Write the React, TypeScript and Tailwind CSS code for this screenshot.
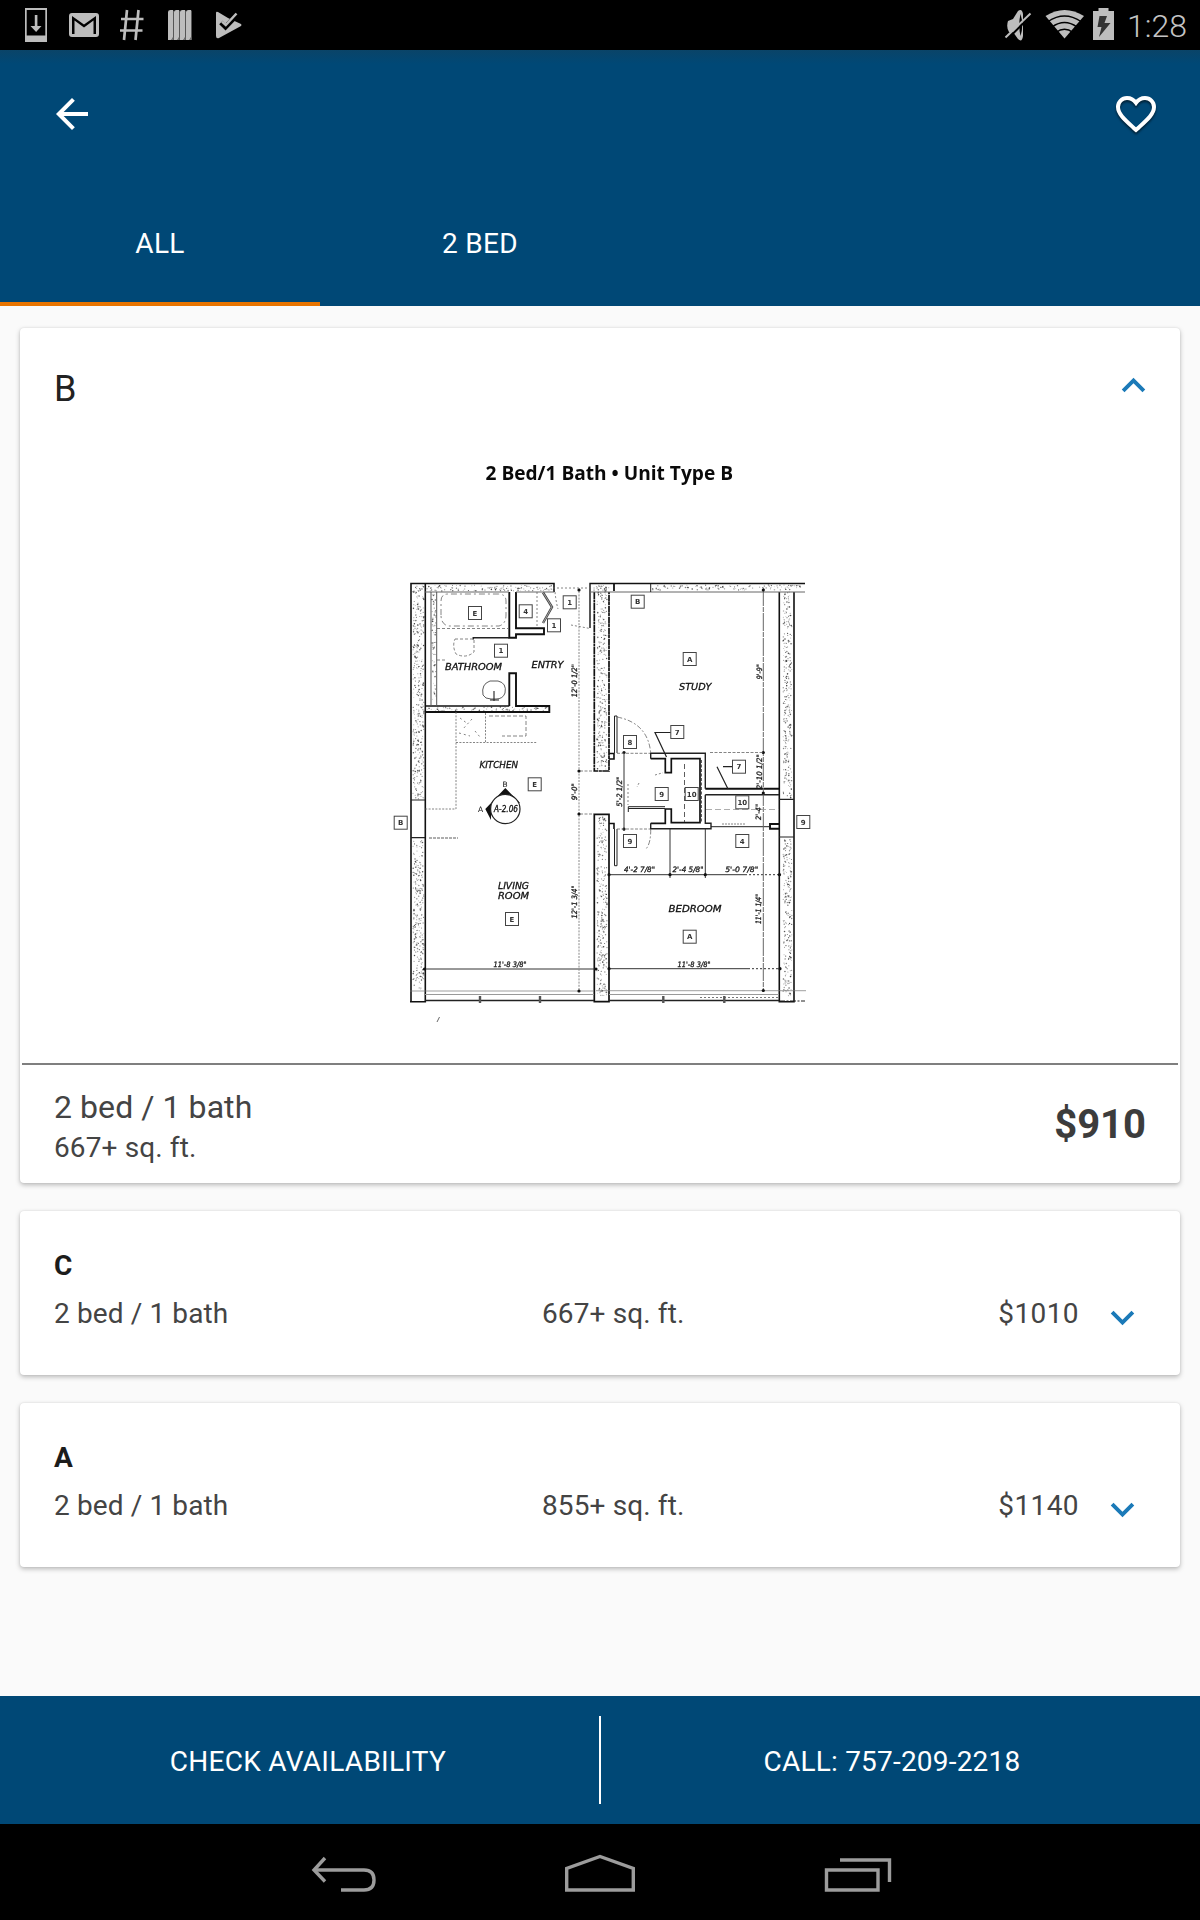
import React from "react";

/* ---------- floor plan ---------- */

type Dot = { x: number; y: number; r: number; o: number };

function stipple(x: number, y: number, w: number, h: number, seed: number): Dot[] {
  const dots: Dot[] = [];
  let s = seed;
  const rnd = () => {
    s = (s * 1103515245 + 12345) % 2147483648;
    return s / 2147483648;
  };
  const n = Math.round((w * h) / 6.5);
  for (let i = 0; i < n; i++) {
    dots.push({ x: x + rnd() * w, y: y + rnd() * h, r: 0.4 + rnd() * 0.4, o: 0.3 + rnd() * 0.55 });
  }
  return dots;
}

const concrete = [
  [413, 586, 11, 213],
  [413, 840, 11, 150],
  [427, 585, 125, 6],
  [432, 594, 4, 110],
  [427, 707, 120, 4],
  [597, 586, 10, 184],
  [597, 816, 10, 180],
  [592, 585, 20, 6],
  [652, 585, 150, 5],
  [783, 592, 9, 206],
  [783, 839, 9, 158],
];

const dots = concrete.flatMap(([x, y, w, h], i) => stipple(x, y, w, h, 911 + i * 77));

function Tag({ x, y, t }: { x: number; y: number; t: string }) {
  return (
    <g>
      <rect x={x - 6.5} y={y - 6.5} width={13} height={13} fill="#fff" stroke="#444" strokeWidth={1} />
      <text x={x} y={y + 2.6} textAnchor="middle" fontSize={7} fontWeight={700} fill="#333">
        {t}
      </text>
    </g>
  );
}

function Room({ x, y, w, t }: { x: number; y: number; w: number; t: string }) {
  return (
    <text x={x} y={y} textLength={w} lengthAdjust="spacingAndGlyphs" fontSize={9.4} fontStyle="italic" fill="#111" stroke="#111" strokeWidth={0.3}>
      {t}
    </text>
  );
}

function Dim({ x, y, w, t, v }: { x: number; y: number; w: number; t: string; v?: boolean }) {
  return (
    <text
      x={x - w / 2}
      y={y + 2.7}
      textLength={w}
      lengthAdjust="spacingAndGlyphs"
      fontSize={7.4}
      fontStyle="italic"
      fill="#1a1a1a"
      stroke="#1a1a1a"
      strokeWidth={0.3}
      transform={v ? `rotate(-90 ${x} ${y})` : undefined}
    >
      {t}
    </text>
  );
}

function FloorPlan() {
  return (
    <svg className="block h-[623px] w-full blur-[0.35px]" viewBox="20 440 1160 623" fontFamily="'DejaVu Sans', sans-serif">
      <text x={485.5} y={480} textLength={247.5} lengthAdjust="spacingAndGlyphs" fontSize={19.6} fontWeight={700} fontFamily="'Open Sans', sans-serif" fill="#0a0a0a">
        2 Bed/1 Bath • Unit Type B
      </text>

      <g>
        {dots.map((d, i) => (
          <circle key={i} cx={d.x} cy={d.y} r={d.r} fill="#222" opacity={d.o} />
        ))}
      </g>

      {/* heavy walls */}
      <g fill="none" stroke="#111" strokeWidth={1.6}>
        <path d="M411 1001.7V583.5H554V592" />
        <path d="M425.3 584V1001.7H410" />
        <path d="M590 628V583.5H805" strokeWidth={1.4} />
        <path d="M614 583V591" strokeWidth={1.8} />
        <path d="M594.3 592V771H609V592" strokeWidth={1.7} strokeDasharray="7 .6 3 .4" />
        <path d="M594.3 1001.7V814.3H609V1001.7Z" strokeWidth={1.7} />
        <path d="M779.3 592V1001.7H794V592" />
        <path d="M509.3 592V637.7H516V634.3H544V628.3H516V592" strokeWidth={1.9} />
        <path d="M509.3 706V673.3H516V706H549.3V712H425" strokeWidth={1.9} />
        <path d="M509.3 706H425" />
        <path d="M650.7 758.7H665.3V772.7H671.3V758.7H700V822.7H671.3V809H665.3V823.3H650.7" strokeWidth={1.7} />
        <path d="M705.3 788.7H779.3" strokeWidth={1.9} />
        <path d="M779 824H770V828.7H779" strokeWidth={1.9} />
        <path d="M609 753.5H614V759H609M609 823.5H614V829" />
      </g>

      {/* thin walls */}
      <g fill="none" stroke="#222" strokeWidth={1}>
        <path d="M425 592H509M516 592H554M590 592H805" stroke="#666" />
        <path d="M650.7 584V592" />
        <path d="M431 592V706M436.7 592V706" stroke="#555" />
        <path d="M473.3 639.5V637.7H509" strokeWidth={1.5} />
        <path d="M411 800H425M411 837.7H425M779 799.3H794M779 837H794" strokeWidth={1.2} />
        <path d="M650.7 758.7V753.3H705.3V788.7M705.3 794.7H779M705.3 794.7V823.3H711V828.7H650.7V823.3" strokeWidth={1.4} />
        <path d="M711 826.7H770" />
        <path d="M628.3 812V806.7H665M628.3 808.5H665" />
        <path d="M614.5 753V716H617V753M614.5 829V865.7H617V829" />
        <path d="M425 1000.5H594M609 1000.5H779" strokeWidth={1.6} />
        <path d="M779 1001H805" strokeDasharray="6 1.5 2 1.5" />
        <path d="M425 994.5H594M609 994.5H779" stroke="#999" />
        <path d="M410 991H594M596 990.7H806" stroke="#777" strokeWidth={0.7} />
        <path d="M700 997.5H779" stroke="#777" strokeDasharray="2 2" />
        <path d="M480 996V1003M540 996V1003M663.3 996V1003M724.3 996V1003" strokeWidth={2.4} stroke="#555" />
      </g>

      {/* dimension lines */}
      <g fill="none" stroke="#333" strokeWidth={1}>
        <path d="M425 969H596M609 968.7H748" />
        <path d="M748 968.7H780" strokeDasharray="2 2" />
        <path d="M609 874.7H745M670 829V878M705.3 829V878M624 752V831" />
        <path d="M745 874.7H779" strokeDasharray="2 2" />
        <path d="M763.3 588V992" strokeDasharray="18 1 5 1" stroke="#666" />
        <path d="M579 588V992" strokeDasharray="2 1.2" stroke="#888" />
      </g>
      <g fill="#111">
        {[
          [424.5, 969], [596, 969], [609, 968.7], [780, 968.7], [609, 874.7], [670, 874.7], [705.3, 874.7], [779.5, 874.7],
          [624, 752.5], [624, 829], [763.3, 590], [763.3, 752.5], [763.3, 793], [763.3, 990.5], [579, 590], [579, 771], [579, 814], [579, 991],
        ].map(([x, y], i) => (
          <circle key={i} cx={x} cy={y} r={1.6} />
        ))}
      </g>

      {/* fixtures and swings */}
      <g fill="none" stroke="#666" strokeWidth={0.8}>
        <path d="M441 615V601Q441 594 448 594H498Q506 594 506 601V615Q506 624 499 626H448Q441 624 441 615" strokeDasharray="6 3 2 3" />
        <path d="M437 628.5H509" strokeDasharray="3 2" />
        <path d="M455 639H474V652Q466 659 456 654Q452 646 455 639M437 660H447" strokeDasharray="3 2" />
        <path d="M483 695Q481 684 490 681H498Q507 683 505 693Q503 699 496 699H491Q485 699 483 695Z" stroke="#333" />
        <path d="M494 691V701M490 700H499" stroke="#222" strokeWidth={1.1} />
        <path d="M456 712V809H425M456 742.5H537M485.5 713V742" strokeDasharray="2 1.4" />
        <path d="M489 716H526V736H502" strokeDasharray="4 2" />
        <path d="M460 718L468 724M472 719L463 729M459 733L470 736M475 731L480 737" strokeDasharray="2 3" />
        <path d="M429 838H458" strokeDasharray="3 1" stroke="#333" />
        <path d="M537 592V628M553 588H590M571 625L590 628.5M555 592Q556 602 558 609" strokeDasharray="2 2" />
        <path d="M617 717Q648 723 650.7 753M650.7 829Q651 843 646 849" strokeDasharray="5 2 2 2" />
        <path d="M617 753.3H650M617 829H650M710 752.5H764M580 771H594M580 814H594" strokeDasharray="3 1.5" />
        <path d="M684.5 764V822" strokeDasharray="5 3" stroke="#333" />
        <path d="M701.5 760V822" strokeDasharray="3 1.5" stroke="#333" />
        <path d="M706 809.5H779" strokeDasharray="6 3" stroke="#999" />
        <path d="M628 784V805M639 783L637 787M655 775L663 772.7" strokeDasharray="2 2" />
        <path d="M722 824H745" strokeDasharray="2 1" />
      </g>
      <path d="M543 592.5L552 607L543 623" fill="none" stroke="#444" strokeWidth={2.4} />
      <path d="M543 592.5L552 607L543 623" fill="none" stroke="#ccc" strokeWidth={0.7} />
      <path d="M671 732.5H655L666.5 757M733 766.7H723M717 766.7L728 789" fill="none" stroke="#222" strokeWidth={1.2} />

      {/* section marker */}
      <path d="M485.3 809L505.3 788L520 803H491V820Z" fill="#111" />
      <circle cx={505.3} cy={809} r={14.7} fill="#fff" stroke="#222" strokeWidth={1.2} />
      <text x={494} y={812.3} textLength={24} lengthAdjust="spacingAndGlyphs" fontSize={8} fontStyle="italic" fill="#111" stroke="#111" strokeWidth={0.3}>A-2.06</text>
      <text x={502.5} y={787.3} fontSize={7.5} fill="#111">B</text>
      <text x={478} y={811.7} fontSize={7.5} fill="#111">A</text>

      <Tag x={475} y={613} t="E" />
      <Tag x={525.7} y={611.3} t="4" />
      <Tag x={569.7} y={602.3} t="1" />
      <Tag x={554} y={625.3} t="1" />
      <Tag x={501} y={650.7} t="1" />
      <Tag x={534.7} y={784.3} t="E" />
      <Tag x={512} y={919} t="E" />
      <Tag x={400.7} y={822.7} t="B" />
      <Tag x={637.7} y={601.7} t="B" />
      <Tag x={689.7} y={659} t="A" />
      <Tag x={677.3} y={732} t="7" />
      <Tag x={630} y={742} t="8" />
      <Tag x={739} y={766.7} t="7" />
      <Tag x={661.7} y={794} t="9" />
      <Tag x={691.7} y={794} t="10" />
      <Tag x={742.3} y={802.3} t="10" />
      <Tag x={803.3} y={822} t="9" />
      <Tag x={630} y={841} t="9" />
      <Tag x={742.3} y={841} t="4" />
      <Tag x={689.7} y={936.7} t="A" />

      <Room x={445} y={670} w={57} t="BATHROOM" />
      <Room x={531.5} y={668.3} w={32} t="ENTRY" />
      <Room x={479.5} y={768} w={38.5} t="KITCHEN" />
      <Room x={498} y={888.5} w={31} t="LIVING" />
      <Room x={498} y={899} w={31} t="ROOM" />
      <Room x={679} y={690} w={32.5} t="STUDY" />
      <Room x={668.5} y={911.5} w={53} t="BEDROOM" />

      <Dim x={574.3} y={680.7} w={33} t={"12'-0 1/2\""} v />
      <Dim x={574.3} y={791.7} w={17} t={"9'-0\""} v />
      <Dim x={574.3} y={902} w={33} t={"12'-1 3/4\""} v />
      <Dim x={510} y={964.5} w={33} t={"11'-8 3/8\""} />
      <Dim x={694} y={964.3} w={33} t={"11'-8 3/8\""} />
      <Dim x={759} y={671.7} w={15} t={"9'-9\""} v />
      <Dim x={759} y={771.7} w={35} t={"2'-10 1/2\""} v />
      <Dim x={758.5} y={812} w={16} t={"2'-4\""} v />
      <Dim x={619.3} y={791.7} w={30} t={"5'-2 1/2\""} v />
      <Dim x={639.5} y={869.7} w={31} t={"4'-2 7/8\""} />
      <Dim x={688} y={869.7} w={31} t={"2'-4 5/8\""} />
      <Dim x={741.7} y={869.7} w={33} t={"5'-0 7/8\""} />
      <Dim x={758.5} y={909} w={30} t={"11'-1 1/4\""} v />

      <path d="M437 1022L439.5 1017" stroke="#555" strokeWidth={0.9} />
    </svg>
  );
}

/* ---------- icons ---------- */

function Chevron({ up }: { up?: boolean }) {
  return (
    <svg className="size-[47px] shrink-0" viewBox="0 0 24 24" fill="#1b7ab8">
      {up ? <path d="M12 8l-6 6 1.41 1.41L12 10.83l4.59 4.58L18 14z" /> : <path d="M16.59 8.59L12 13.17 7.41 8.59 6 10l6 6 6-6z" />}
    </svg>
  );
}

function StatusIconsLeft() {
  return (
    <svg className="h-[50px] w-[260px]" viewBox="0 0 260 50" fill="#bdbdbd">
      <path fillRule="evenodd" d="M25 8H47V42H25ZM26.700 10V35.500H45.300V10Z" />
      <path d="M34.800 15H37.400V26H41.500L36.100 32L30.500 26H34.800Z" />
      <path fillRule="evenodd" d="M72 13H96Q99 13 99 16V34Q99 37 96 37H72Q69 37 69 34V16Q69 13 72 13ZM72 16V34H74.500V20.500L84 27.500L93.500 20.500V34H96V16L84 24.500Z" />
      <path d="M127 10L124 40M138.500 10L135.500 40M121 19H143.500M120 30.500H142.500" fill="none" stroke="#bdbdbd" strokeWidth="2.700" />
      {[168, 174, 180, 186].map((x) => (
        <g key={x}>
          <path d={`M${x} 12Q${x} 10 ${x + 2.5} 10H${x + 5.2}V37L${x + 3.5} 40H${x}Z`} />
          <path d={`M${x + 5.2} 11V37L${x + 3} 40H${x + 5.8}V11Z`} fill="#777" />
        </g>
      ))}
      <path d="M216 13Q216 11 218 12L228 18L241 24Q242 25 241 26L219 38Q216 39 216 36Z" />
      <path d="M221 22.500L225.500 27L236.500 15.500" fill="none" stroke="#000" strokeWidth="5" />
      <path d="M222 21.500L225.800 25L236.500 13.500" fill="none" stroke="#bdbdbd" strokeWidth="2.500" />
    </svg>
  );
}

function StatusIconsRight() {
  return (
    <svg className="h-[50px] w-[120px]" viewBox="1000 0 120 50" fill="#bdbdbd">
      <path d="M1008 21L1013 19L1018 11Q1022 8 1023 14V36Q1022 43 1018 39L1013 32H1009Q1006 27 1008 21Z" />
      <path d="M1020.500 14Q1024 25 1020.500 36Q1018 25 1020.500 14Z" fill="#000" />
      <path d="M1007 39.500L1032 14.500" stroke="#000" strokeWidth="2" />
      <path d="M1005.500 37.500L1030.500 13.500" stroke="#bdbdbd" strokeWidth="2" />
      <path d="M1045.500 16Q1064.500 4 1084 16L1064.500 38.500Z" />
      <g fill="none" stroke="#000" strokeWidth="1.500">
        <path d="M1048 21.500Q1064.500 10.500 1081 21.500" />
        <path d="M1052 27Q1064.500 18 1077 27" />
        <path d="M1056 32.500Q1064.500 26 1073 32.500" />
      </g>
      <path d="M1093 11H1098.500V8H1108.500V11H1114V40H1093Z" />
      <path d="M1099.500 16H1107L1104.500 23H1110.500L1099 37L1101.500 27H1097.500Z" fill="#333" />
    </svg>
  );
}

function UnitRow({ name, size, price }: { name: string; size: string; price: string }) {
  return (
    <section className="h-[164px] rounded-[4px] bg-white px-[34px] shadow-[0_2px_5px_rgba(0,0,0,0.26),0_0_2px_rgba(0,0,0,0.1)]">
      <h2 className="pt-[38px] text-[28px] leading-[34px] font-bold text-[#1c1c1c]">{name}</h2>
      <div className="mt-[14px] flex h-[34px] items-center text-[28px] leading-[34px] tracking-[0.12px] text-[#444]">
        <span className="w-[488px]">2 bed / 1 bath</span>
        <span className="flex-1">{size}</span>
        <span className="tracking-[0.4px]">{price}</span>
        <span className="mt-[7px] ml-[20px] flex">
          <Chevron />
        </span>
      </div>
    </section>
  );
}

export default function App() {
  return (
    <div className="flex h-[1920px] w-[1200px] flex-col overflow-hidden bg-[#fafafa] font-[Roboto,sans-serif]">
      <div className="flex h-[50px] shrink-0 items-center bg-black">
        <StatusIconsLeft />
        <div className="ml-auto flex items-center">
          <StatusIconsRight />
          <span className="h-[50px] w-[80px] pt-px pl-[7px] text-[32px] leading-[50px] font-light text-[#c4c4c4]">1:28</span>
        </div>
      </div>

      <header className="flex h-[256px] shrink-0 flex-col bg-[#004876] bg-[linear-gradient(#0a4468,#004876_14px)] text-white">
        <div className="flex items-center justify-between px-[40px] pt-[40px] pl-[48px]">
          <svg className="size-12" viewBox="0 0 24 24" fill="currentColor">
            <path d="M20 11H7.830l5.590-5.590L12 4l-8 8 8 8 1.410-1.410L7.830 13H20v-2z" />
          </svg>
          <svg className="size-12 drop-shadow-[0_2px_1px_rgba(0,0,0,0.55)]" viewBox="0 0 24 24" fill="none" stroke="currentColor" strokeWidth="2">
            <path d="M12 19.950L10.600 18.700C6 14.500 3 11.800 3 8.500 3 6 5 4 7.500 4c1.740 0 3.410.9 4.500 2.400C13.090 4.900 14.760 4 16.500 4 19 4 21 6 21 8.500c0 3.300-3 6-7.600 10.200z" />
          </svg>
        </div>
        <nav className="mt-auto flex h-[128px] text-[28px] tracking-[0.3px]">
          <div className="flex w-[320px] items-center justify-center border-b-4 border-[#e87400] pt-[8px]">ALL</div>
          <div className="flex w-[320px] items-center justify-center pt-[4px]">2 BED</div>
        </nav>
      </header>

      <main className="flex flex-1 flex-col gap-[28px] px-5 pt-[22px]">
        <section className="flex h-[855px] flex-col rounded-[4px] bg-white shadow-[0_2px_5px_rgba(0,0,0,0.26),0_0_2px_rgba(0,0,0,0.1)]">
          <div className="flex h-[112px] items-center justify-between pr-[23px] pl-[34px]">
            <h1 className="pt-[10px] text-[36px] leading-[44px] text-[#222]">B</h1>
            <span className="pt-[2px]">
              <Chevron up />
            </span>
          </div>
          <FloorPlan />
          <div className="mx-[2px] h-[2px] bg-[#7f7f7f]" />
          <div className="flex flex-1 items-center justify-between px-[34px]">
            <div className="pt-[5px] text-[#444]">
              <p className="text-[32px] leading-[42px] tracking-[0.07px]">2 bed / 1 bath</p>
              <p className="text-[28px] leading-[39px] tracking-[0.12px]">667+ sq. ft.</p>
            </div>
            <strong className="pt-[1px] text-[40px] leading-[48px] font-bold text-[#3c3c3c]">$910</strong>
          </div>
        </section>
        <UnitRow name="C" size="667+ sq. ft." price="$1010" />
        <UnitRow name="A" size="855+ sq. ft." price="$1140" />
      </main>

      <div className="flex h-[128px] shrink-0 items-center bg-[#004876] text-[28px] text-white">
        <div className="w-[599px] pt-[3px] pl-[17px] text-center tracking-[0.28px]">CHECK AVAILABILITY</div>
        <div className="h-[88px] w-[2px] bg-white" />
        <div className="w-[599px] pt-[3px] pr-[17px] text-center tracking-[0.2px]">CALL: 757-209-2218</div>
      </div>

      <div className="flex h-[96px] shrink-0 items-center justify-center bg-black">
        <svg className="h-[96px] w-[600px]" viewBox="300 1824 600 96" fill="none" stroke="#9c9c9c" strokeWidth="3.400">
          <path d="M315 1870H364Q374 1870 374 1880T364 1890H341" />
          <path d="M325 1858L314 1870L325 1881.500" />
          <path d="M566.700 1890V1868.500L600 1856.500L633.300 1868.500V1890Z" />
          <path d="M826.500 1870H878V1890H826.500Z" />
          <path d="M840 1860H889.500V1882" />
        </svg>
      </div>
    </div>
  );
}
